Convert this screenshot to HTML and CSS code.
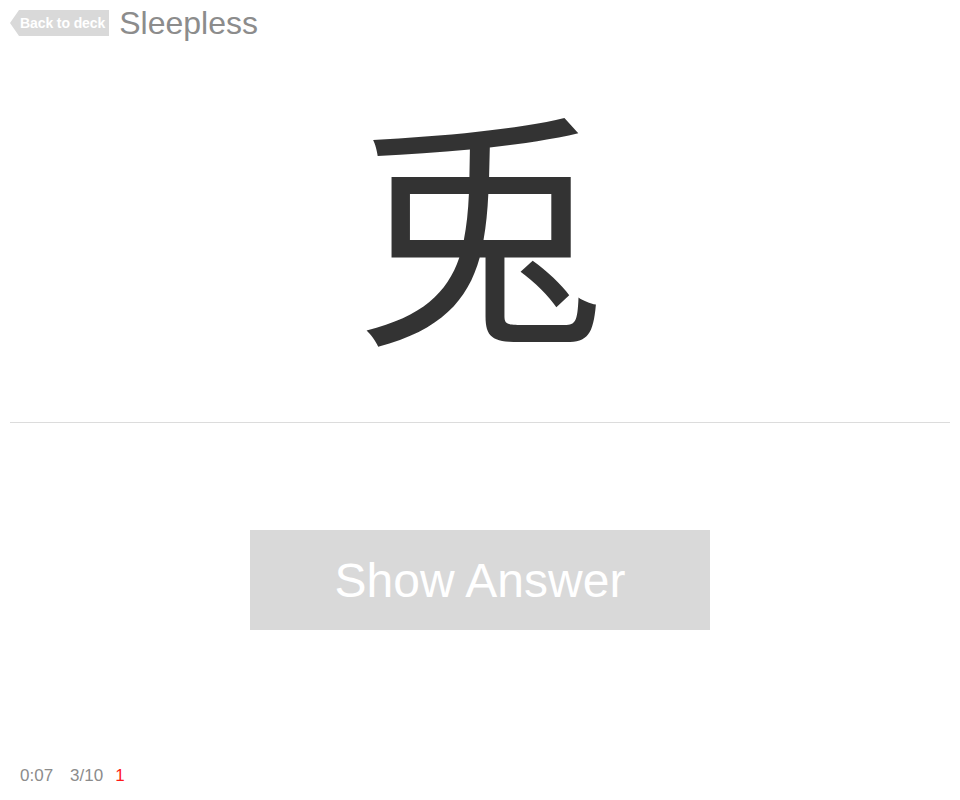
FILE: index.html
```html
<!DOCTYPE html>
<html>
<head>
<meta charset="utf-8">
<link rel="stylesheet" href="styles.css">
</head>
<body>
<div class="page">
  <header class="topbar">
    <a class="back">Back to deck</a>
    <span class="deck-title">Sleepless</span>
  </header>
  <section class="card">
    <div class="kanji">兎</div>
  </section>
  <hr class="divider">
  <div class="actions">
    <button class="show-answer">Show Answer</button>
  </div>
  <footer class="status">
    <span class="timer">0:07</span>
    <span class="progress">3/10</span>
    <span class="fails">1</span>
  </footer>
</div>
</body>
</html>
```
FILE: styles.css
```css
html, body {
  margin: 0;
  padding: 0;
  background: #fff;
}
body {
  font-family: "Liberation Sans", Arial, sans-serif;
}
.page {
  width: 960px;
  height: 800px;
  display: flex;
  flex-direction: column;
}
.topbar {
  display: flex;
  align-items: center;
  gap: 10px;
  padding: 10px 0 0 10px;
  height: 26px;
}
.back {
  position: relative;
  display: block;
  height: 26px;
  line-height: 26px;
  margin-left: 9px;
  padding: 0 4px 0 1px;
  background: #d9d9d9;
  color: #fff;
  font-weight: bold;
  font-size: 14px;
  letter-spacing: -0.1px;
}
.back::before {
  content: "";
  position: absolute;
  left: -9px;
  top: 0;
  border-style: solid;
  border-width: 13px 9px 13px 0;
  border-color: transparent #d9d9d9 transparent transparent;
}
.deck-title {
  font-size: 32px;
  color: #8c8c8c;
  line-height: 26px;
}
.card {
  height: 362px;
  padding-bottom: 24px;
  display: flex;
  justify-content: center;
  align-items: center;
}
.kanji {
  font-family: "Noto Sans CJK JP", "Noto Sans CJK SC", sans-serif;
  font-size: 252px;
  line-height: 1;
  color: #333;
}
.divider {
  margin: 0 10px;
  border: 0;
  border-top: 1px solid #dcdcdc;
  height: 0;
}
.actions {
  display: flex;
  justify-content: center;
  padding-top: 107px;
}
.show-answer {
  width: 460px;
  height: 100px;
  border: 0;
  background: #d9d9d9;
  color: #fff;
  font-family: "Liberation Sans", Arial, sans-serif;
  font-size: 48px;
  padding: 0;
}
.status {
  margin-top: auto;
  padding: 0 0 14px 20px;
  font-size: 17px;
  color: #8c8c8c;
  display: flex;
  gap: 17px;
}
.status .fails {
  color: #ff1a1a;
  margin-left: -5px;
}
```
